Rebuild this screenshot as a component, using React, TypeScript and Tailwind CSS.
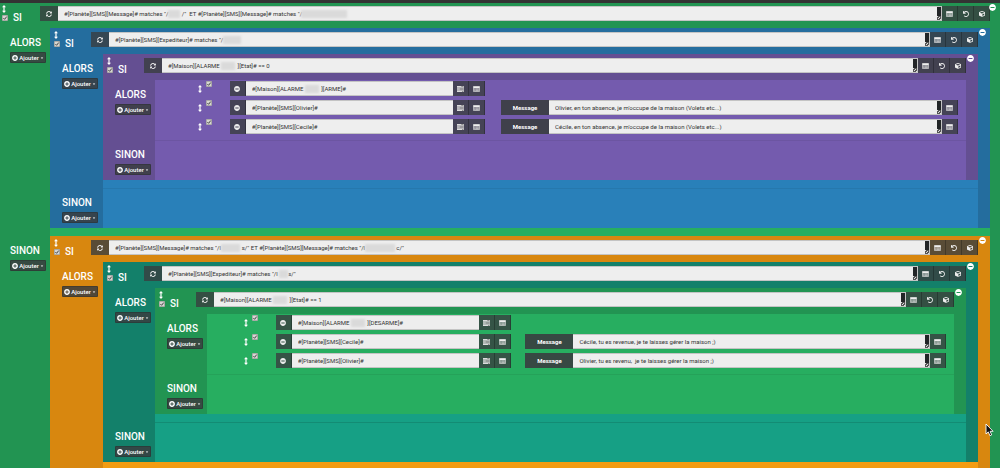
import React from 'react';
import { FaCaretDown, FaCube, FaMinusCircle, FaPlusCircle, FaSyncAlt, FaUndo } from 'react-icons/fa';

interface Mask {
  left: number;
  width: number;
}

interface ActionData {
  command: string;
  masks?: Mask[];
  message?: string;
}

interface Tone {
  dark: string;
  light: string;
  line: string;
}

const tones: Record<string, Tone> = {
  green: { dark: 'bg-[#229452]', light: 'bg-[#27ae60]', line: 'border-[#25a259]' },
  blue: { dark: 'bg-[#246d9e]', light: 'bg-[#2980b9]', line: 'border-[#2678ad]' },
  purple: { dark: 'bg-[#644f92]', light: 'bg-[#745bae]', line: 'border-[#6c55a2]' },
  orange: { dark: 'bg-[#d8870f]', light: 'bg-[#f39c12]', line: 'border-[#d8870f]' },
  teal: { dark: 'bg-[#13806a]', light: 'bg-[#16a085]', line: 'border-[#138c74]' },
};

const gap = (n: number) => ' '.repeat(n);

const MoveIcon: React.FC<{ className?: string }> = ({ className = '' }) => (
  <svg viewBox="0 0 4 8" className={`h-2 w-1 ${className}`}>
    <path d="M2 0 4 2.2H2.6v3.6H4L2 8 0 5.8h1.4V2.2H0z" fill="#fff" />
  </svg>
);

const ListIcon: React.FC = () => (
  <svg viewBox="0 0 14 12" className="h-[6px] w-[7px]">
    <rect x="0.7" y="0.7" width="12.6" height="10.6" rx="1.4" fill="#fff" fillOpacity="0.35" stroke="#ddd" strokeWidth="1.4" />
    <path d="M1 1h12v3H1z" fill="#eee" />
    <path d="M2.5 6h1.5M5 6h6.5M2.5 8.8h1.5M5 8.8h6.5" stroke="#ddd" strokeWidth="1.2" />
  </svg>
);

const TasksIcon: React.FC = () => (
  <svg viewBox="0 0 14 12" className="h-[6px] w-[7px]">
    <path d="M0 0h14v3.4H0zM0 4.4h14v3.2H0zM0 8.6h14V12H0z" fill="#ddd" />
    <path d="M8.5 1.2H13v1H8.5zM5.5 5.5H13v1H5.5zM10 9.8h3v1h-3z" fill="#444" />
  </svg>
);

const ToolButton: React.FC<{ label: string; children: React.ReactNode }> = ({ label, children }) => (
  <button
    type="button"
    aria-label={label}
    className="flex h-full w-4 shrink-0 items-center justify-center border-r border-black/25 bg-[#3a3d40]/80 text-[#eeeeee]"
  >
    {children}
  </button>
);

const Tick: React.FC<{ label: string }> = ({ label }) => (
  <span className="relative block h-[6px] w-[6px]">
    <input
      type="checkbox"
      defaultChecked
      aria-label={label}
      className="block h-[6px] w-[6px] appearance-none rounded-[1px] border border-black/20 bg-[#d6d6d2]"
    />
    <svg viewBox="0 0 6 6" className="pointer-events-none absolute inset-0 h-[6px] w-[6px]">
      <path d="M1.4 3.1 2.6 4.3 4.7 1.6" fill="none" stroke="#333" strokeWidth="0.9" />
    </svg>
  </span>
);

interface FieldProps {
  label: string;
  value: string;
  masks?: Mask[];
  handle?: boolean;
}

const Field: React.FC<FieldProps> = ({ label, value, masks = [], handle = false }) => (
  <div className="relative h-full min-w-0 flex-1">
    <input
      type="text"
      aria-label={label}
      defaultValue={value}
      className="block h-full w-full border-y border-[#c4c4c4] bg-[#eeeeee] pr-2 pl-[6px] text-[6px] text-[#333333] outline-none"
    />
    {masks.map((mask) => (
      <span
        key={mask.left}
        className="absolute top-1 h-2 bg-[#dadada] blur-[1px]"
        style={{ left: mask.left, width: mask.width }}
      />
    ))}
    {handle && (
      <span className="absolute inset-y-px right-0 flex w-[5px] flex-col border-r border-[#c4c4c4]">
        <span className="flex-1 bg-[#222527]" />
        <svg viewBox="0 0 4 4" className="h-1 w-1">
          <path d="M0 0h4v4H0z" fill="#555" />
          <path d="M0 0h1v1H0zM2 1h1v1H2zM1 2h1v1H1zM3 3h1v1H3z" fill="#ddd" />
        </svg>
      </span>
    )}
  </div>
);

const Action: React.FC<ActionData> = ({ command, masks, message }) => (
  <div className="flex h-[15px] pr-2">
    <div className="flex w-[9.3%] shrink-0 justify-end gap-1 pr-[18px]">
      <MoveIcon className="mt-1" />
      <Tick label={`Activer ${command}`} />
    </div>
    <div className="flex w-[31.8%] shrink-0">
      <ToolButton label="Supprimer">
        <FaMinusCircle className="h-[6px] w-[6px]" />
      </ToolButton>
      <Field label="Commande" value={command} masks={masks} />
      <ToolButton label="Choisir un mot-clé">
        <TasksIcon />
      </ToolButton>
      <ToolButton label="Choisir une commande">
        <ListIcon />
      </ToolButton>
    </div>
    {message && (
      <div className="ml-[2%] flex min-w-0 flex-1">
        <span className="flex w-12 shrink-0 items-center justify-center bg-[#3a3d40]/90 text-[6px] font-bold text-white">
          Message
        </span>
        <Field label="Message" value={message} handle />
        <ToolButton label="Choisir une commande">
          <ListIcon />
        </ToolButton>
      </div>
    )}
  </div>
);

interface SectionProps {
  tone: Tone;
  title: string;
  rail: string;
  children?: React.ReactNode;
  line?: boolean;
}

const Section: React.FC<SectionProps> = ({ tone, title, rail, children, line }) => (
  <div className="flex min-h-10">
    <div className={`${rail} shrink-0 pt-[9px]`}>
      <h2 className="text-[10px] leading-3 font-medium text-white">{title}</h2>
      <button
        type="button"
        className="mt-[3px] flex h-[11px] w-9 items-center justify-center gap-px rounded-[1px] border border-black/15 bg-[#3a3d40]/85 text-[6px] font-medium text-white"
      >
        <FaPlusCircle className="h-[6px] w-[6px]" />
        Ajouter
        <FaCaretDown className="h-1 w-1" />
      </button>
    </div>
    <div className={`min-w-0 flex-1 ${tone.light} ${line ? `border-t ${tone.line}` : ''}`}>{children}</div>
  </div>
);

interface BlockProps {
  tone: Tone;
  condition: string;
  masks?: Mask[];
  rail?: string;
  root?: boolean;
  then: React.ReactNode;
  otherwise?: React.ReactNode;
  hasElse?: boolean;
}

const Block: React.FC<BlockProps> = ({
  tone,
  condition,
  masks,
  rail = 'w-[52px] pl-3',
  root = false,
  then,
  otherwise,
  hasElse = true,
}) => (
  <section className={`relative ${tone.dark} ${root ? 'pr-[10px]' : 'pr-3'}`}>
    <div className={`flex ${root ? 'h-[25px] pt-[3px]' : 'h-[26px] pt-1'}`}>
      <div className={`-mt-px flex shrink-0 ${root ? 'w-10 pl-[2px]' : 'w-[41px] pl-1'}`}>
        <div className="flex flex-col items-start gap-[2px]">
          <MoveIcon />
          <Tick label="Activer le bloc" />
        </div>
        <h2 className="mt-[7px] ml-[5px] text-[10px] leading-3 font-medium text-white">SI</h2>
      </div>
      <div className="flex h-[15px] min-w-0 flex-1">
        <button
          type="button"
          aria-label="Répétition"
          className="flex w-[18px] shrink-0 items-center justify-center bg-[#3a3d40]/80 text-[#eeeeee]"
        >
          <FaSyncAlt className="h-[6px] w-[6px]" />
        </button>
        <Field label="Condition" value={condition} masks={masks} handle />
        <ToolButton label="Choisir une commande">
          <ListIcon />
        </ToolButton>
        <ToolButton label="Choisir un scénario">
          <FaUndo className="h-[6px] w-[6px]" />
        </ToolButton>
        <ToolButton label="Choisir un équipement">
          <FaCube className="h-[6px] w-[6px]" />
        </ToolButton>
      </div>
    </div>
    <button type="button" aria-label="Supprimer le bloc" className="absolute top-px right-1 text-white">
      <FaMinusCircle className="h-[7px] w-[7px]" />
    </button>
    <Section tone={tone} title="ALORS" rail={rail}>
      {then}
    </Section>
    {hasElse && (
      <Section tone={tone} title="SINON" rail={rail} line={!root}>
        {otherwise}
      </Section>
    )}
  </section>
);

const ActionList: React.FC<{ actions: ActionData[] }> = ({ actions }) => (
  <div className="flex flex-col gap-1 pt-px pb-[6px]">
    {actions.map((action) => (
      <Action key={action.command} {...action} />
    ))}
  </div>
);

const armActions: ActionData[] = [
  { command: `#[Maison][ALARME ${gap(11)}][ARME]#`, masks: [{ left: 59, width: 14 }] },
  {
    command: '#[Planète][SMS][Olivier]#',
    message: "Olivier, en ton absence, je m'occupe de la maison (Volets etc...)",
  },
  {
    command: '#[Planète][SMS][Cecile]#',
    message: "Cécile, en ton absence, je m'occupe de la maison (Volets etc...)",
  },
];

const disarmActions: ActionData[] = [
  { command: `#[Maison][ALARME ${gap(11)}][DESARME]#`, masks: [{ left: 59, width: 14 }] },
  {
    command: '#[Planète][SMS][Cecile]#',
    message: 'Cécile, tu es revenue, je te laisses gérer la maison ;)',
  },
  {
    command: '#[Planète][SMS][Olivier]#',
    message: 'Olivier, tu es revenu,  je te laisses gérer la maison ;)',
  },
];

const App: React.FC = () => (
  <main className="relative h-screen overflow-hidden border-t-[3px] border-[#333333] bg-[#229452] font-['Roboto',sans-serif]">
    <Block
      root
      tone={tones.green}
      rail="w-[50px] pl-[10px]"
      condition={`#[Planète][SMS][Message]# matches "/${gap(9)}/"  ET #[Planète][SMS][Message]# matches "/`}
      masks={[
        { left: 110, width: 12 },
        { left: 243, width: 46 },
      ]}
      then={
        <div className="pb-2">
          <Block
            tone={tones.blue}
            rail="w-[53px] pl-3"
            condition={'#[Planète][SMS][Expediteur]# matches "/'}
            masks={[{ left: 114, width: 18 }]}
            then={
              <div className="pb-2">
                <Block
                  tone={tones.purple}
                  condition={`#[Maison][ALARME ${gap(11)}][Etat]# == 0`}
                  masks={[{ left: 59, width: 14 }]}
                  then={<ActionList actions={armActions} />}
                />
              </div>
            }
          />
        </div>
      }
      otherwise={
        <Block
          tone={tones.orange}
          rail="w-[53px] pl-3"
          condition={`#[Planète][SMS][Message]# matches "/l${gap(14)}s/" ET #[Planète][SMS][Message]# matches "/l${gap(21)}c/"`}
          masks={[
            { left: 112, width: 19 },
            { left: 256, width: 30 },
          ]}
          hasElse={false}
          then={
            <div className="pb-2">
              <Block
                tone={tones.teal}
                condition={`#[Planète][SMS][Expediteur]# matches "/l${gap(7)}s/"`}
                masks={[{ left: 117, width: 9 }]}
                then={
                  <div className="pb-2">
                    <Block
                      tone={tones.green}
                      condition={`#[Maison][ALARME ${gap(11)}][Etat]# == 1`}
                      masks={[{ left: 59, width: 14 }]}
                      then={<ActionList actions={disarmActions} />}
                    />
                  </div>
                }
              />
            </div>
          }
        />
      }
    />
    {/* mouse pointer */}
    <svg viewBox="0 0 9 14" className="pointer-events-none absolute top-[420px] right-[6px] h-[14px] w-[9px]">
      <path d="M1 1v10l2.3-2.1 1.6 3.8 1.8-.8-1.6-3.6h3z" fill="#111" stroke="#fff" strokeWidth="0.9" />
    </svg>
  </main>
);

export default App;
